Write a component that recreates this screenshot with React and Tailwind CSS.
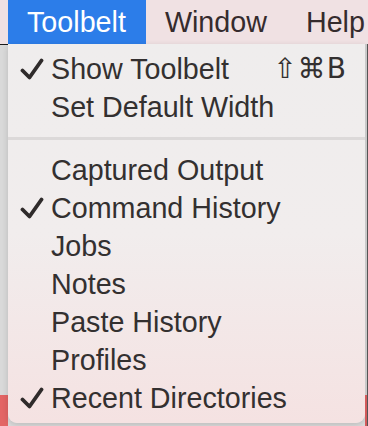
const items = [
  { label: 'Show Toolbelt', checked: true, shortcut: '⇧⌘B' },
  { label: 'Set Default Width' },
  { sep: true },
  { label: 'Captured Output' },
  { label: 'Command History', checked: true },
  { label: 'Jobs' },
  { label: 'Notes' },
  { label: 'Paste History' },
  { label: 'Profiles' },
  { label: 'Recent Directories', checked: true },
];

function Check() {
  return (
    <svg width="24" height="22" viewBox="0 0 24 22" className="shrink-0">
      <path d="M2.5 12.5 L9.5 19.5 L21.5 2.5" fill="none" stroke="#2f2b2b" strokeWidth="3.8" strokeLinecap="round" strokeLinejoin="round" />
    </svg>
  );
}

export default function App() {
  return (
    <div className="w-[368px] h-[426px] overflow-hidden flex flex-col bg-[#dcdcdc] font-['Helvetica_Neue','Liberation_Sans',Arial,sans-serif] text-[28.7px] leading-none">
      {/* Menu bar */}
      <div className="h-[44px] shrink-0 flex items-stretch bg-[#f0e1e3] pl-[8px] text-[#352b2d]">
        <div className="flex items-center pl-[19px] pr-[20px] bg-[#2c7de9] text-white">Toolbelt</div>
        <div className="flex items-center pl-[19px] pr-[20px]">Window</div>
        <div className="flex items-center pl-[19px] pr-[20px]">Help</div>
      </div>

      <div className="flex-1 flex">
        {/* window behind, left */}
        <div className="w-[8px] shrink-0 flex flex-col border-t border-[#1a1a1a]">
          <div className="flex-1 bg-[#d9d9d9]" />
          <div className="h-[31px] bg-[#e36565]" />
        </div>

        {/* Dropdown */}
        <div className="flex-1 self-start h-[379px] rounded-b-[9px] bg-gradient-to-b from-[#efeded] via-[#f1eded] to-[#f5e2e2] pt-[6px] pb-[6px] text-[#333030] shadow-[0_2px_6px_rgba(0,0,0,0.15)]">
          {items.map((it, i) =>
            it.sep ? (
              <div key={i} className="h-[25px] flex items-center">
                <div className="w-full h-[3px] bg-[#dcd9d9]" />
              </div>
            ) : (
              <div key={i} className="h-[38px] flex items-center pl-[12px] pr-[18px]">
                <div className="w-[31px] shrink-0 flex items-center">{it.checked && <Check />}</div>
                <span className="flex-1">{it.label}</span>
                {it.shortcut && <span className="font-['DejaVu_Sans','Liberation_Sans',sans-serif] text-[28px] tracking-[1px]">{it.shortcut}</span>}
              </div>
            )
          )}
        </div>

        {/* window behind, right */}
        <div className="w-[3px] shrink-0 flex flex-col bg-[#c9c9c9] border-r border-[#555]">
          <div className="flex-1" />
          <div className="h-[31px] bg-[#d25a5a]" />
        </div>
      </div>
    </div>
  );
}
